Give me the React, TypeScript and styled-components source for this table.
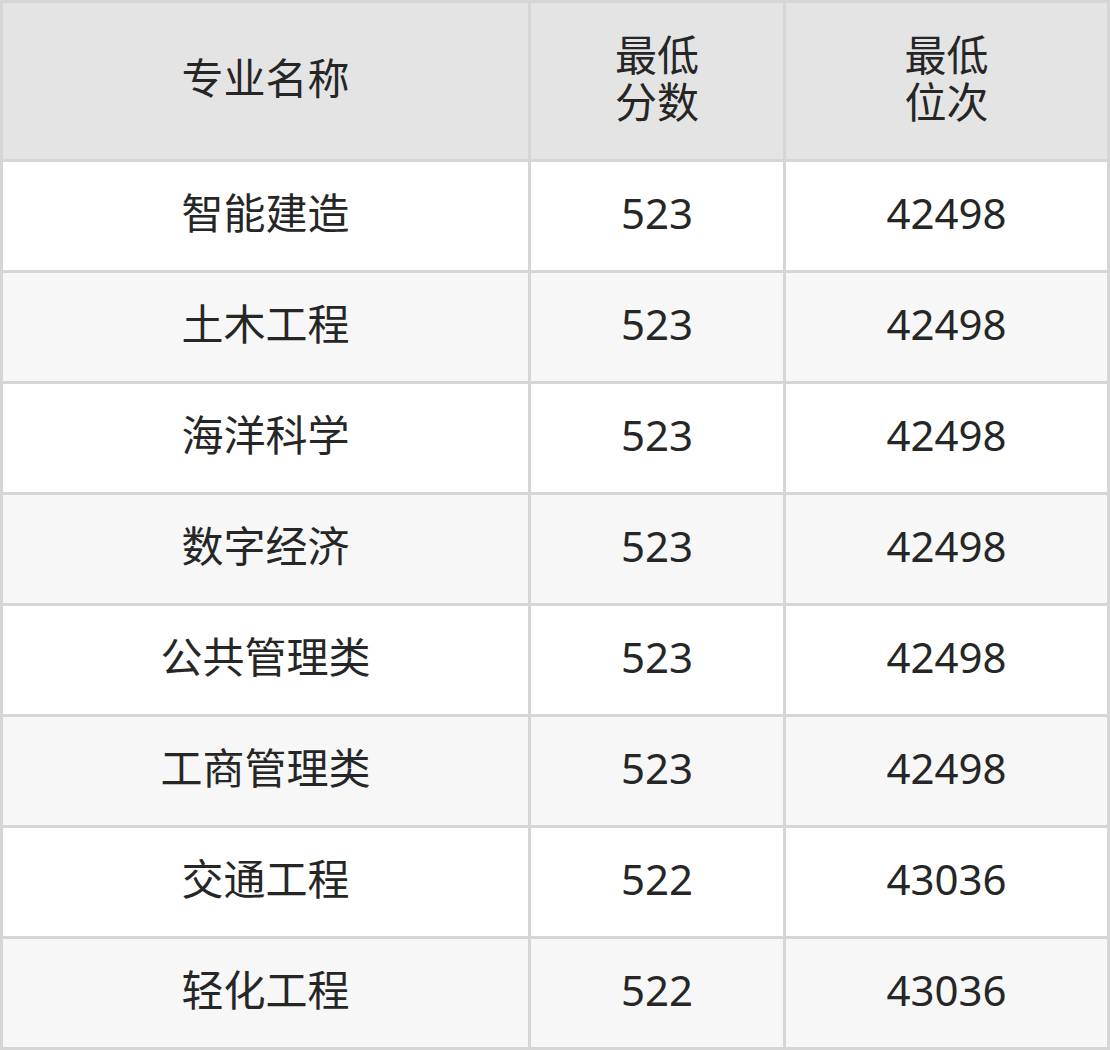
import React from "react";
import styled, { createGlobalStyle } from "styled-components";

const Global = createGlobalStyle`
  html, body { margin: 0; padding: 0; background: #fff; }
  body { font-family: "Noto Sans", "Noto Sans CJK SC", sans-serif; }
`;

const Table = styled.div`
  width: 1110px;
  display: flex;
  flex-direction: column;
  gap: 3px;
  background: #d6d6d6;
  padding: 3px;
  box-sizing: border-box;
`;

const Row = styled.div`
  display: grid;
  grid-template-columns: 525px 252px 321px;
  column-gap: 3px;
`;

const Cell = styled.div<{ $head?: boolean; $alt?: boolean }>`
  height: ${(p) => (p.$head ? "156px" : "108px")};
  box-sizing: border-box;
  padding-bottom: 7px;
  background: ${(p) => (p.$head ? "#e4e4e4" : p.$alt ? "#f7f7f7" : "#ffffff")};
  display: flex;
  align-items: center;
  justify-content: center;
  text-align: center;
  color: #262626;
  font-size: 42px;
  line-height: 47px;
  font-family: "Noto Sans", "Noto Sans CJK SC", sans-serif;
`;

const rows: [string, string, string][] = [
  ["智能建造", "523", "42498"],
  ["土木工程", "523", "42498"],
  ["海洋科学", "523", "42498"],
  ["数字经济", "523", "42498"],
  ["公共管理类", "523", "42498"],
  ["工商管理类", "523", "42498"],
  ["交通工程", "522", "43036"],
  ["轻化工程", "522", "43036"],
];

export default function App() {
  return (
    <>
      <Global />
      <Table>
        <Row>
          <Cell $head>专业名称</Cell>
          <Cell $head>最低<br />分数</Cell>
          <Cell $head>最低<br />位次</Cell>
        </Row>
        {rows.map((r, i) => (
          <Row key={i}>
            <Cell $alt={i % 2 === 1}>{r[0]}</Cell>
            <Cell $alt={i % 2 === 1}>{r[1]}</Cell>
            <Cell $alt={i % 2 === 1}>{r[2]}</Cell>
          </Row>
        ))}
      </Table>
    </>
  );
}
